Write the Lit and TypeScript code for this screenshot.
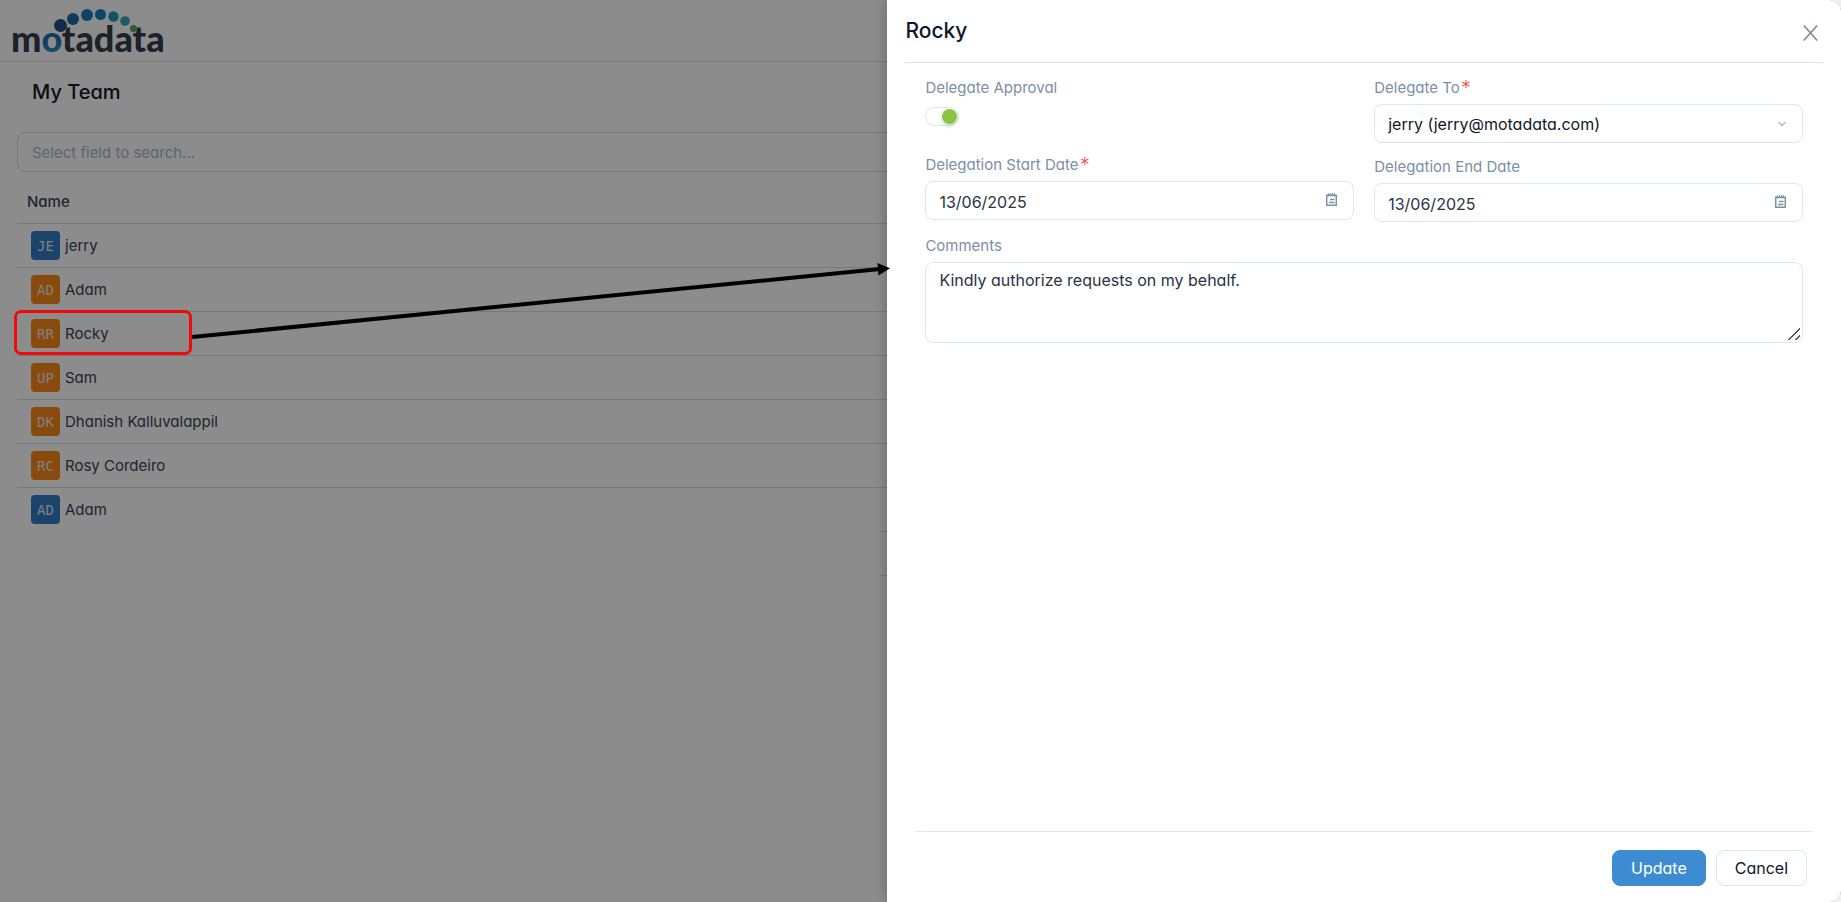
import { LitElement, html, css, svg } from "lit";
import { customElement } from "lit/decorators.js";
import { classMap } from "lit/directives/class-map.js";

interface Member {
  initials: string;
  name: string;
  tone: "blue" | "orange";
}

const MEMBERS: Member[] = [
  { initials: "JE", name: "jerry", tone: "blue" },
  { initials: "AD", name: "Adam", tone: "orange" },
  { initials: "RR", name: "Rocky", tone: "orange" },
  { initials: "UP", name: "Sam", tone: "orange" },
  { initials: "DK", name: "Dhanish Kalluvalappil", tone: "orange" },
  { initials: "RC", name: "Rosy Cordeiro", tone: "orange" },
  { initials: "AD", name: "Adam", tone: "blue" },
];

const FONT = css`
  font-family: Inter, "Open Sans", sans-serif;
  font-feature-settings: "cv11" 1;
`;

@customElement("team-page")
export class TeamPage extends LitElement {
  static styles = css`
    :host {
      display: block;
      ${FONT}
      color: #364658;
    }
    .top {
      height: 61px;
      border-bottom: 1px solid #d5dce4;
    }
    .logo {
      display: block;
    }
    .logo-text {
      font-family: Lato, sans-serif;
      font-weight: 900;
      font-size: 36px;
    }
    h1 {
      margin: 0;
      padding: 15px 32px 0;
      font-size: 20px;
      line-height: 30px;
      font-weight: 500;
      color: #101828;
    }
    .content {
      padding: 25px 17px 0;
    }
    .search {
      display: block;
      box-sizing: border-box;
      width: 100%;
      height: 40px;
      padding: 0 14px;
      border: 1px solid #d5dce4;
      border-radius: 8px;
      background: transparent;
      font: inherit;
      font-feature-settings: inherit;
      font-size: 15px;
    }
    .search::placeholder {
      color: #a5bad0;
      opacity: 1;
    }
    table {
      width: 100%;
      margin-top: 8px;
      border-collapse: collapse;
    }
    th {
      height: 43px;
      padding: 0 10px;
      text-align: left;
      font-size: 15px;
      font-weight: 500;
      border-bottom: 1px solid #d5dce4;
    }
    td {
      height: 43px;
      padding: 0 14px;
      font-size: 15px;
      border-bottom: 1px solid #d5dce4;
    }
    tr:last-child td {
      border-bottom: 0;
    }
    .member {
      display: flex;
      align-items: center;
      gap: 5px;
    }
    .avatar {
      width: 29px;
      height: 29px;
      border-radius: 4px;
      text-align: center;
      font-family: "DejaVu Sans Mono", monospace;
      font-size: 14px;
      line-height: 30px;
      color: #e8e8e8;
    }
    .blue {
      background: #317cc3;
    }
    .orange {
      background: #fa881a;
    }
    .rest {
      height: 43px;
      margin-left: 863px;
      border-top: 1px solid #d5dce4;
      border-bottom: 1px solid #d5dce4;
    }
  `;

  render() {
    return html`
      <header class="top">
        <svg class="logo" width="176" height="60" viewBox="0 0 176 60" role="img" aria-label="motadata">
          <defs>
            <linearGradient id="ring" x1="0" y1="0" x2="0" y2="1">
              <stop offset="0" stop-color="#1c5f98" />
              <stop offset="0.65" stop-color="#2277ae" />
              <stop offset="1" stop-color="#35b5c5" />
            </linearGradient>
          </defs>
          <text class="logo-text" x="11" y="52" fill="#343e4c">m<tspan fill="url(#ring)">o</tspan>tadata</text>
          <circle cx="60.5" cy="25.5" r="6.5" fill="#1f507e" />
          <circle cx="73" cy="19" r="6" fill="#1b6ba9" />
          <circle cx="87" cy="15" r="6" fill="#1679bb" />
          <circle cx="100.5" cy="14.5" r="5.5" fill="#1b80bf" />
          <circle cx="113.5" cy="16.5" r="5.2" fill="#2496bf" />
          <circle cx="125" cy="21" r="4.8" fill="#36a5b3" />
          <circle cx="133.5" cy="28.5" r="3.6" fill="#4fae5c" />
        </svg>
      </header>
      <h1>My Team</h1>
      <div class="content">
        <input class="search" type="text" aria-label="Search" placeholder="Select field to search..." />
        <table>
          <thead>
            <tr>
              <th scope="col">Name</th>
            </tr>
          </thead>
          <tbody>
            ${MEMBERS.map(
              (m) => html`<tr>
                <td>
                  <div class="member">
                    <span class=${classMap({ avatar: true, [m.tone]: true })}>${m.initials}</span>
                    <span>${m.name}</span>
                  </div>
                </td>
              </tr>`
            )}
          </tbody>
        </table>
        <div class="rest"></div>
      </div>
    `;
  }
}

const calendarIcon = svg`
  <path d="M1.7 2.2h9.6v10.1H1.7z" fill="none" stroke="#7b8fa5" stroke-width="1.5" stroke-linejoin="round" />
  <path d="M3.5 0.2v3.4M5.5 0.2v3.4M7.5 0.2v3.4M9.5 0.2v3.4" stroke="#7b8fa5" stroke-width="1.1" />
  <path d="M5 6.5h4.5M4 9.5h5.5" stroke="#7b8fa5" stroke-width="1.3" />
`;

@customElement("delegate-drawer")
export class DelegateDrawer extends LitElement {
  static styles = css`
    :host {
      display: flex;
      flex-direction: column;
      box-sizing: border-box;
      background: #fff;
      ${FONT}
      color: #273444;
    }
    header {
      display: flex;
      align-items: center;
      justify-content: space-between;
      height: 63px;
      margin: 0 18px;
      box-sizing: border-box;
      border-bottom: 1px solid #dee5ed;
    }
    h2 {
      margin: 0;
      font-size: 21px;
      line-height: 30px;
      font-weight: 500;
      color: #101828;
    }
    button {
      font: inherit;
      font-feature-settings: inherit;
      cursor: pointer;
    }
    .close {
      display: flex;
      padding: 6px 5px 2px;
      border: 0;
      background: none;
    }
    form {
      flex: 1;
      display: flex;
      flex-direction: column;
      gap: 13px;
      padding: 14px 38px 0;
    }
    .columns {
      display: grid;
      grid-template-columns: 1fr 1fr;
      gap: 20px;
    }
    .column {
      display: flex;
      flex-direction: column;
      gap: 13px;
    }
    .field {
      display: flex;
      flex-direction: column;
      gap: 5px;
    }
    label {
      font-size: 15px;
      line-height: 22px;
      color: #7b8fa5;
    }
    .required::after {
      content: "*";
      margin-left: 2px;
      font-family: "DejaVu Sans", sans-serif;
      font-size: 17px;
      line-height: 1px;
      color: #f04e3e;
    }
    .toggle-row {
      height: 37px;
    }
    .toggle {
      appearance: none;
      display: flex;
      justify-content: flex-end;
      align-items: center;
      box-sizing: border-box;
      width: 34px;
      height: 19px;
      margin: 3px 0 0;
      padding: 0 1px;
      border: 1px solid #dee5ed;
      border-radius: 10px;
    }
    .toggle::before {
      content: "";
      width: 15px;
      height: 15px;
      border-radius: 50%;
      background: #89c540;
      box-shadow: 0 2px 4px rgba(0, 35, 11, 0.2);
    }
    .control {
      display: grid;
      align-items: center;
    }
    .control > * {
      grid-area: 1 / 1;
    }
    .control svg {
      justify-self: end;
      margin-right: 16px;
      pointer-events: none;
    }
    .control .calendar {
      margin-bottom: 2px;
    }
    input[type="text"],
    select,
    textarea {
      box-sizing: border-box;
      width: 100%;
      height: 39px;
      padding: 0 13px;
      border: 1px solid #dee5ed;
      border-radius: 8px;
      background: #fff;
      font: inherit;
      font-feature-settings: inherit;
      font-size: 16px;
      color: #273444;
    }
    input[type="text"] {
      padding-top: 3px;
    }
    select {
      appearance: none;
      color: #101828;
    }
    textarea {
      display: block;
      height: 81px;
      padding-top: 5px;
      line-height: 24px;
      resize: vertical;
    }
    textarea::-webkit-resizer {
      background: linear-gradient(
          135deg,
          transparent 46%,
          #555 46%,
          #555 56%,
          transparent 56%,
          transparent 76%,
          #555 76%,
          #555 86%,
          transparent 86%
        )
        1px 1px / 12px 12px no-repeat;
    }
    footer {
      display: flex;
      justify-content: flex-end;
      gap: 10px;
      margin: 0 29px;
      padding: 18px 5px 16px;
      border-top: 1px solid #dee5ed;
    }
    .action {
      height: 36px;
      padding: 0 18px 1px;
      border: 1px solid #dee5ed;
      border-radius: 8px;
      background: #fff;
      font-size: 16px;
      color: #101828;
    }
    .primary {
      border-color: #3d8cd2;
      background: #3d8cd2;
      color: #fff;
    }
  `;

  private dateField(id: string, label: string, required: boolean) {
    return html`<div class="field">
      <label for=${id} class=${classMap({ required })}>${label}</label>
      <div class="control">
        <input id=${id} type="text" .value=${"13/06/2025"} />
        <svg class="calendar" width="13" height="14" viewBox="0 0 13 14" aria-hidden="true">${calendarIcon}</svg>
      </div>
    </div>`;
  }

  render() {
    return html`
      <header>
        <h2>Rocky</h2>
        <button class="close" type="button" aria-label="Close">
          <svg width="15" height="18" viewBox="0 0 15 18">
            <path d="M0.8 1.5l13.4 15M14.2 1.5l-13.4 15" fill="none" stroke="#7b8fa5" stroke-width="1.8" />
          </svg>
        </button>
      </header>
      <form>
        <div class="columns">
          <div class="column">
            <div class="field">
              <label for="approval">Delegate Approval</label>
              <div class="toggle-row">
                <input id="approval" class="toggle" type="checkbox" role="switch" checked />
              </div>
            </div>
            ${this.dateField("start", "Delegation Start Date", true)}
          </div>
          <div class="column">
            <div class="field">
              <label for="delegate" class="required">Delegate To</label>
              <div class="control">
                <select id="delegate">
                  <option>jerry (jerry@motadata.com)</option>
                </select>
                <svg width="10" height="6" viewBox="0 0 10 6" aria-hidden="true">
                  <path d="M1.5 1L5 4.5 8.5 1" fill="none" stroke="#a5bad0" stroke-width="1.3" />
                </svg>
              </div>
            </div>
            ${this.dateField("end", "Delegation End Date", false)}
          </div>
        </div>
        <div class="field">
          <label for="comments">Comments</label>
          <textarea id="comments" .value=${"Kindly authorize requests on my behalf."}></textarea>
        </div>
      </form>
      <footer>
        <button class="action primary" type="button">Update</button>
        <button class="action" type="button">Cancel</button>
      </footer>
    `;
  }
}

@customElement("app-root")
export class AppRoot extends LitElement {
  static styles = css`
    :host {
      display: block;
      background: #f0f0f0;
    }
    .shell {
      position: relative;
      min-height: 100vh;
      overflow: hidden;
      border-radius: 0 12px 12px 0;
      background: #fff;
    }
    .backdrop {
      position: absolute;
      inset: 0;
      background: rgba(0, 0, 0, 0.45);
    }
    .drawer {
      position: absolute;
      inset: 0 0 0 auto;
      width: 51.8%;
      box-shadow: -2px 0 12px rgba(0, 0, 0, 0.2);
    }
    .callout {
      position: absolute;
      top: 0;
      left: 0;
      pointer-events: none;
    }
  `;

  render() {
    return html`
      <div class="shell">
        <team-page></team-page>
        <div class="backdrop"></div>
        <delegate-drawer class="drawer" role="dialog" aria-label="Rocky"></delegate-drawer>
        <svg class="callout" width="900" height="380" viewBox="0 0 900 380" aria-hidden="true">
          <path d="M192 337L880 269" stroke="#000" stroke-width="4" />
          <path d="M877.5 263L890 268.3 878.5 275.5z" fill="#000" />
          <rect x="15.5" y="311.5" width="175" height="42" rx="5.5" fill="none" stroke="#f00a0a" stroke-width="3" />
        </svg>
      </div>
    `;
  }
}
